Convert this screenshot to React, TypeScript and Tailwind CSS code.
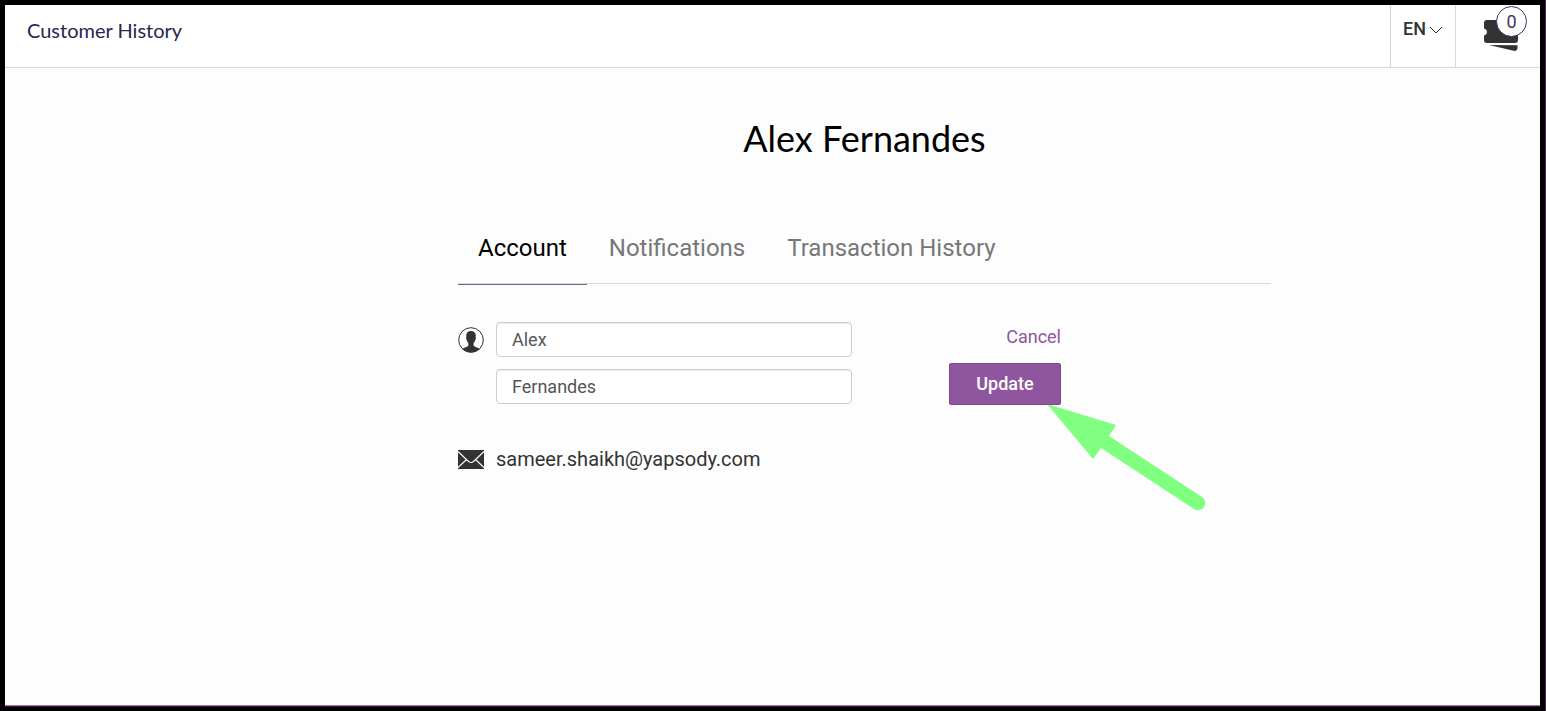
import { useState } from 'react'

const tabs = ['Account', 'Notifications', 'Transaction History']

function classNames(...classes: string[]) {
  return classes.filter(Boolean).join(' ')
}

function TicketsIcon() {
  return (
    <svg viewBox="0 0 36 32" className="h-8 w-9" fill="#333333" aria-hidden="true">
      <path d="M4 0h28a3 3 0 0 1 3 3v17a3 3 0 0 1-3 3H4a3 3 0 0 1-3-3v-4.500c1.700-.3 3-1.800 3-3.500s-1.300-3.200-3-3.500V3a3 3 0 0 1 3-3z" />
      <path d="M6 25l28.500.3v2.200c0 2.500-1.500 3.800-4 3.300z" />
    </svg>
  )
}

function UserIcon() {
  return (
    <svg viewBox="0 0 26 26" className="size-[26px] shrink-0" aria-hidden="true">
      <circle cx="13" cy="13" r="12.300" fill="#ffffff" stroke="#333333" />
      <path
        fill="#333333"
        d="M13 4c3 0 4.800 1.700 4.800 4.600 0 .8-.1 1.300-.2 1.900.6.300.5 1.800-.4 2.400-.3 1.300-.8 2.200-1.600 3v2.200c0 1 1 1.500 2.600 2.100 1.500.5 2.800 1 3.600 1.700A12.300 12.300 0 0 1 13 25.300a12.300 12.300 0 0 1-8.800-3.400c.8-.7 2.100-1.200 3.600-1.700 1.600-.6 2.600-1.100 2.600-2.100v-2.200c-.8-.8-1.300-1.700-1.600-3-.9-.6-1-2.100-.4-2.400-.1-.6-.2-1.100-.2-1.900C8.200 5.700 10 4 13 4z"
      />
    </svg>
  )
}

function MailIcon() {
  return (
    <svg viewBox="0 0 26 19" className="h-[19px] w-[26px] shrink-0" aria-hidden="true">
      <path fill="#333333" d="M0 0h26v19H0z" />
      <path fill="none" stroke="#fdfdfd" strokeWidth="1.200" d="M0 1.500l10.500 10q2.500 2 5 0L26 1.500M0 17.500l8.500-8M26 17.500l-8.500-8" />
    </svg>
  )
}

function Header() {
  return (
    <header className="flex h-[63px] items-stretch border-b border-[#d8d8d8] bg-white">
      <h2 className="flex-1 pt-3 pl-[22px] font-['Lato',sans-serif] text-xl leading-[26px] text-[#2b2350]">Customer History</h2>
      <div className="relative w-[66px] border-x border-[#d8d8d8]">
        <select
          aria-label="Language"
          className="w-full cursor-pointer appearance-none bg-transparent pt-3 pl-3 text-lg leading-6 font-medium text-[#333333] outline-none"
        >
          <option>EN</option>
        </select>
        <svg viewBox="0 0 14 8" className="pointer-events-none absolute top-[21px] right-3 h-2 w-[14px]" fill="none" stroke="#333333" aria-hidden="true">
          <path d="M1 1l6 6 6-6" />
        </svg>
      </div>
      <a href="#cart" aria-label="Cart" className="relative flex w-[84px] pt-[15px] pl-[27px]">
        <TicketsIcon />
        <span className="absolute top-px right-[13px] flex size-[31px] items-center justify-center rounded-full border border-[#3b3468] bg-white text-lg text-[#3b3468]">
          0
        </span>
      </a>
    </header>
  )
}

export default function App() {
  const [selectedTab, setSelectedTab] = useState('Account')
  const [firstName, setFirstName] = useState('Alex')
  const [lastName, setLastName] = useState('Fernandes')

  const inputClass =
    'h-[35px] w-full rounded border border-[#cccccc] bg-white px-[15px] text-lg text-[#555555] shadow-[inset_0_1px_1px_rgba(0,0,0,0.075)] outline-none'

  return (
    <div className="flex min-h-screen bg-[#4a2350] pr-px font-['Roboto',sans-serif]">
      <div className="flex flex-1 flex-col border-x-[5px] border-t-[5px] border-b-4 border-black bg-[#fdfdfd]">
        <Header />
        <main className="flex-1 pr-[269px] pl-[453px]">
          <h1 className="pt-12 text-center font-['Lato',sans-serif] text-4xl leading-[44px] text-black">Alex Fernandes</h1>

          <div role="tablist" className="mt-[62px] flex h-[62px] gap-0.5 border-b border-[#d8dadc]">
            {tabs.map((tab) => (
              <button
                key={tab}
                role="tab"
                aria-selected={selectedTab === tab}
                onClick={() => setSelectedTab(tab)}
                className={classNames(
                  selectedTab === tab ? 'border-[#5f7088] text-black' : 'border-transparent text-[#777777]',
                  'h-[63px] cursor-pointer border-b px-5 pb-[10px] text-2xl',
                )}
              >
                {tab}
              </button>
            ))}
          </div>

          <form className="mt-[38px] flex" onSubmit={(e) => e.preventDefault()}>
            <div className="flex w-[394px] gap-3">
              <div className="pt-[5px]">
                <UserIcon />
              </div>
              <div className="flex flex-1 flex-col gap-3">
                <input aria-label="First name" className={inputClass} value={firstName} onChange={(e) => setFirstName(e.target.value)} />
                <input aria-label="Last name" className={inputClass} value={lastName} onChange={(e) => setLastName(e.target.value)} />
              </div>
            </div>
            <div className="ml-[97px] flex w-28 flex-col items-end gap-3">
              <a href="#cancel" className="text-lg leading-[29px] text-[#8f559e]">
                Cancel
              </a>
              <div className="relative w-full">
                <button type="submit" className="h-[42px] w-full cursor-pointer rounded-xs border border-[#7f4a8d] bg-[#8f559e] text-lg font-medium text-white">
                  Update
                </button>
                <svg viewBox="0 0 160 108" className="pointer-events-none absolute top-full left-[98px] h-[108px] w-40" fill="#80ff80" aria-hidden="true">
                  <path d="M0 -1L69 20L62 31L155 92A7 7 0 0 1 147 104L54 43L46 54Z" />
                </svg>
              </div>
            </div>
          </form>

          <div className="mt-10 flex items-center gap-3">
            <MailIcon />
            <span className="text-xl text-[#333333]">sameer.shaikh@yapsody.com</span>
          </div>
        </main>
        <div className="h-px bg-[#9a739d]" />
        <div className="h-px bg-[#40104a]" />
      </div>
    </div>
  )
}
